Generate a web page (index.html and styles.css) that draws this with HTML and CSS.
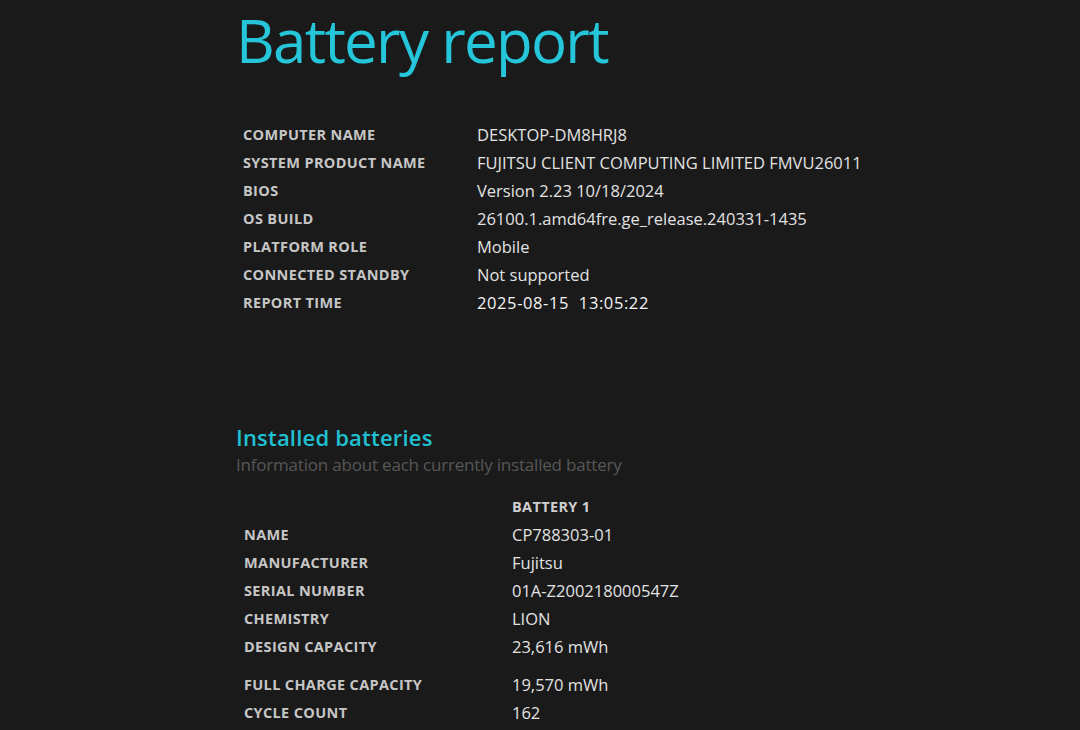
FILE: index.html
```html
<!DOCTYPE html>
<html lang="en">
<head>
<meta charset="utf-8">
<title>Battery report</title>
<link rel="stylesheet" href="styles.css">
</head>
<body>
<main class="page">
  <h1 class="title">Battery report</h1>

  <dl class="info">
    <dt>COMPUTER NAME</dt><dd>DESKTOP-DM8HRJ8</dd>
    <dt>SYSTEM PRODUCT NAME</dt><dd>FUJITSU CLIENT COMPUTING LIMITED FMVU26011</dd>
    <dt>BIOS</dt><dd>Version 2.23 10/18/2024</dd>
    <dt>OS BUILD</dt><dd>26100.1.amd64fre.ge_release.240331-1435</dd>
    <dt>PLATFORM ROLE</dt><dd>Mobile</dd>
    <dt>CONNECTED STANDBY</dt><dd>Not supported</dd>
    <dt>REPORT TIME</dt><dd class="time">2025-08-15&nbsp; 13:05:22</dd>
  </dl>

  <section class="section">
    <h2 class="section-title">Installed batteries</h2>
    <p class="section-sub">Information about each currently installed battery</p>

    <dl class="battery">
      <dt class="blank"></dt><dd class="head">BATTERY 1</dd>
      <dt>NAME</dt><dd>CP788303-01</dd>
      <dt>MANUFACTURER</dt><dd>Fujitsu</dd>
      <dt>SERIAL NUMBER</dt><dd>01A-Z200218000547Z</dd>
      <dt>CHEMISTRY</dt><dd>LION</dd>
      <dt>DESIGN CAPACITY</dt><dd>23,616 mWh</dd>
      <dt class="gap">FULL CHARGE CAPACITY</dt><dd class="gap">19,570 mWh</dd>
      <dt>CYCLE COUNT</dt><dd>162</dd>
    </dl>
  </section>
</main>
</body>
</html>
```

FILE: styles.css
```css
html, body {
  margin: 0;
  padding: 0;
  background: #1a1a1a;
}

body {
  font-family: "Open Sans", "Noto Sans", sans-serif;
  color: #e4e4e4;
  height: 730px;
  overflow: hidden;
}

.page {
  padding-left: 236px;
}

.title {
  margin: 0;
  font-weight: 400;
  font-size: 60px;
  line-height: 80px;
  letter-spacing: -1.7px;
  color: #25c6da;
}

.info {
  display: grid;
  grid-template-columns: 234px auto;
  margin: 40px 0 0 7px;
}

.battery {
  display: grid;
  grid-template-columns: 268px auto;
  margin: 14px 0 0 8px;
}

.info dt,
.info dd,
.battery dt,
.battery dd {
  margin: 0;
  height: 28px;
  display: flex;
  align-items: center;
  box-sizing: border-box;
}

.info dt,
.battery dt {
  font-size: 14.5px;
  font-weight: 700;
  color: #c6c6c6;
  letter-spacing: 0.35px;
}

.info dd,
.battery dd {
  font-size: 16.5px;
  color: #e2e2e2;
  letter-spacing: 0;
}

.info dd.time {
  color: #f4f4f4;
  font-weight: 500;
  letter-spacing: 0.6px;
}

.section {
  margin-top: 106px;
}

.section-title {
  margin: 0;
  font-size: 22px;
  font-weight: 600;
  line-height: 30px;
  color: #1fc1d2;
  letter-spacing: 0.2px;
}

.section-sub {
  margin: 0;
  font-size: 17px;
  line-height: 26px;
  color: #575757;
  letter-spacing: -0.2px;
}

.battery dd.head {
  font-size: 14.5px;
  font-weight: 700;
  color: #cfcfcf;
  letter-spacing: 0.35px;
}

.battery .gap {
  height: 38px;
  padding-top: 10px;
}
```
